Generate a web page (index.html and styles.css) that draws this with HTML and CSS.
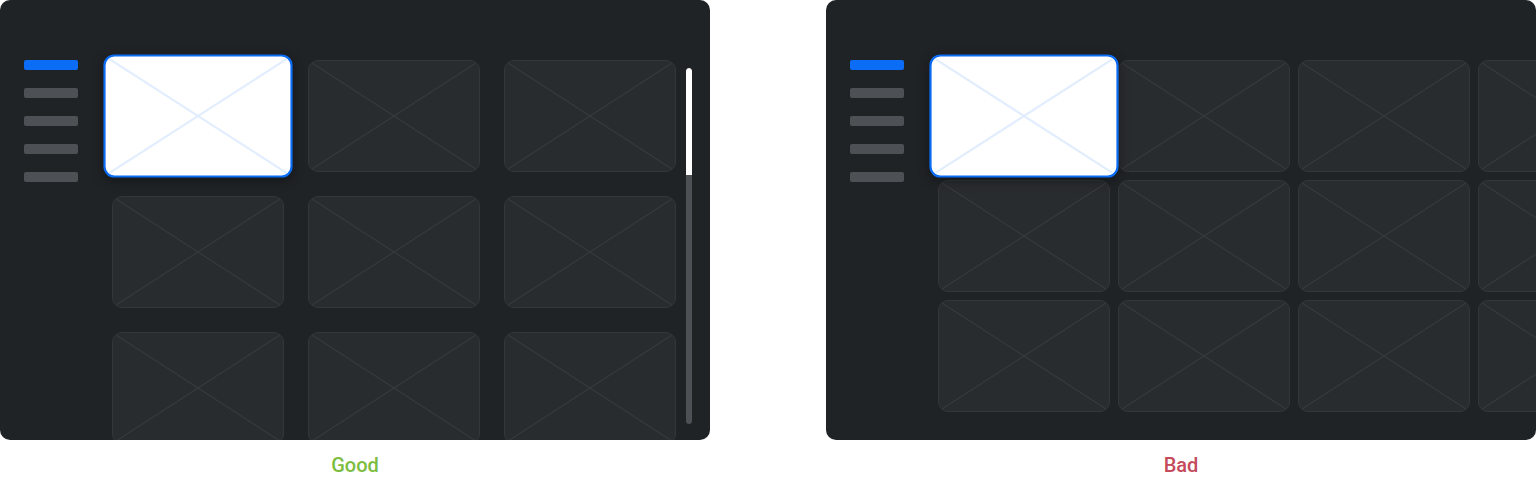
FILE: index.html
```html
<!DOCTYPE html>
<html lang="en">
<head>
<meta charset="utf-8">
<title>Focus in grid</title>
<link rel="stylesheet" href="styles.css">
</head>
<body>
<div class="compare">
  <figure class="example">
    <div class="panel">
      <nav class="side">
        <span class="bar bar-active"></span>
        <span class="bar"></span>
        <span class="bar"></span>
        <span class="bar"></span>
        <span class="bar"></span>
      </nav>
      <div class="grid grid-good">
        <div class="card card-focus"><svg class="x" viewBox="0 0 100 100" preserveAspectRatio="none"><line x1="0" y1="0" x2="100" y2="100" vector-effect="non-scaling-stroke"/><line x1="100" y1="0" x2="0" y2="100" vector-effect="non-scaling-stroke"/></svg></div>
        <div class="card"><svg class="x" viewBox="0 0 100 100" preserveAspectRatio="none"><line x1="0" y1="0" x2="100" y2="100" vector-effect="non-scaling-stroke"/><line x1="100" y1="0" x2="0" y2="100" vector-effect="non-scaling-stroke"/></svg></div>
        <div class="card"><svg class="x" viewBox="0 0 100 100" preserveAspectRatio="none"><line x1="0" y1="0" x2="100" y2="100" vector-effect="non-scaling-stroke"/><line x1="100" y1="0" x2="0" y2="100" vector-effect="non-scaling-stroke"/></svg></div>
        <div class="card"><svg class="x" viewBox="0 0 100 100" preserveAspectRatio="none"><line x1="0" y1="0" x2="100" y2="100" vector-effect="non-scaling-stroke"/><line x1="100" y1="0" x2="0" y2="100" vector-effect="non-scaling-stroke"/></svg></div>
        <div class="card"><svg class="x" viewBox="0 0 100 100" preserveAspectRatio="none"><line x1="0" y1="0" x2="100" y2="100" vector-effect="non-scaling-stroke"/><line x1="100" y1="0" x2="0" y2="100" vector-effect="non-scaling-stroke"/></svg></div>
        <div class="card"><svg class="x" viewBox="0 0 100 100" preserveAspectRatio="none"><line x1="0" y1="0" x2="100" y2="100" vector-effect="non-scaling-stroke"/><line x1="100" y1="0" x2="0" y2="100" vector-effect="non-scaling-stroke"/></svg></div>
        <div class="card"><svg class="x" viewBox="0 0 100 100" preserveAspectRatio="none"><line x1="0" y1="0" x2="100" y2="100" vector-effect="non-scaling-stroke"/><line x1="100" y1="0" x2="0" y2="100" vector-effect="non-scaling-stroke"/></svg></div>
        <div class="card"><svg class="x" viewBox="0 0 100 100" preserveAspectRatio="none"><line x1="0" y1="0" x2="100" y2="100" vector-effect="non-scaling-stroke"/><line x1="100" y1="0" x2="0" y2="100" vector-effect="non-scaling-stroke"/></svg></div>
        <div class="card"><svg class="x" viewBox="0 0 100 100" preserveAspectRatio="none"><line x1="0" y1="0" x2="100" y2="100" vector-effect="non-scaling-stroke"/><line x1="100" y1="0" x2="0" y2="100" vector-effect="non-scaling-stroke"/></svg></div>
      </div>
      <div class="scroll"><span class="thumb"></span></div>
    </div>
    <figcaption class="label label-good">Good</figcaption>
  </figure>

  <figure class="example">
    <div class="panel">
      <nav class="side">
        <span class="bar bar-active"></span>
        <span class="bar"></span>
        <span class="bar"></span>
        <span class="bar"></span>
        <span class="bar"></span>
      </nav>
      <div class="grid grid-bad">
        <div class="card card-focus"><svg class="x" viewBox="0 0 100 100" preserveAspectRatio="none"><line x1="0" y1="0" x2="100" y2="100" vector-effect="non-scaling-stroke"/><line x1="100" y1="0" x2="0" y2="100" vector-effect="non-scaling-stroke"/></svg></div>
        <div class="card"><svg class="x" viewBox="0 0 100 100" preserveAspectRatio="none"><line x1="0" y1="0" x2="100" y2="100" vector-effect="non-scaling-stroke"/><line x1="100" y1="0" x2="0" y2="100" vector-effect="non-scaling-stroke"/></svg></div>
        <div class="card"><svg class="x" viewBox="0 0 100 100" preserveAspectRatio="none"><line x1="0" y1="0" x2="100" y2="100" vector-effect="non-scaling-stroke"/><line x1="100" y1="0" x2="0" y2="100" vector-effect="non-scaling-stroke"/></svg></div>
        <div class="card"><svg class="x" viewBox="0 0 100 100" preserveAspectRatio="none"><line x1="0" y1="0" x2="100" y2="100" vector-effect="non-scaling-stroke"/><line x1="100" y1="0" x2="0" y2="100" vector-effect="non-scaling-stroke"/></svg></div>
        <div class="card"><svg class="x" viewBox="0 0 100 100" preserveAspectRatio="none"><line x1="0" y1="0" x2="100" y2="100" vector-effect="non-scaling-stroke"/><line x1="100" y1="0" x2="0" y2="100" vector-effect="non-scaling-stroke"/></svg></div>
        <div class="card"><svg class="x" viewBox="0 0 100 100" preserveAspectRatio="none"><line x1="0" y1="0" x2="100" y2="100" vector-effect="non-scaling-stroke"/><line x1="100" y1="0" x2="0" y2="100" vector-effect="non-scaling-stroke"/></svg></div>
        <div class="card"><svg class="x" viewBox="0 0 100 100" preserveAspectRatio="none"><line x1="0" y1="0" x2="100" y2="100" vector-effect="non-scaling-stroke"/><line x1="100" y1="0" x2="0" y2="100" vector-effect="non-scaling-stroke"/></svg></div>
        <div class="card"><svg class="x" viewBox="0 0 100 100" preserveAspectRatio="none"><line x1="0" y1="0" x2="100" y2="100" vector-effect="non-scaling-stroke"/><line x1="100" y1="0" x2="0" y2="100" vector-effect="non-scaling-stroke"/></svg></div>
        <div class="card"><svg class="x" viewBox="0 0 100 100" preserveAspectRatio="none"><line x1="0" y1="0" x2="100" y2="100" vector-effect="non-scaling-stroke"/><line x1="100" y1="0" x2="0" y2="100" vector-effect="non-scaling-stroke"/></svg></div>
        <div class="card"><svg class="x" viewBox="0 0 100 100" preserveAspectRatio="none"><line x1="0" y1="0" x2="100" y2="100" vector-effect="non-scaling-stroke"/><line x1="100" y1="0" x2="0" y2="100" vector-effect="non-scaling-stroke"/></svg></div>
        <div class="card"><svg class="x" viewBox="0 0 100 100" preserveAspectRatio="none"><line x1="0" y1="0" x2="100" y2="100" vector-effect="non-scaling-stroke"/><line x1="100" y1="0" x2="0" y2="100" vector-effect="non-scaling-stroke"/></svg></div>
        <div class="card"><svg class="x" viewBox="0 0 100 100" preserveAspectRatio="none"><line x1="0" y1="0" x2="100" y2="100" vector-effect="non-scaling-stroke"/><line x1="100" y1="0" x2="0" y2="100" vector-effect="non-scaling-stroke"/></svg></div>
      </div>
    </div>
    <figcaption class="label label-bad">Bad</figcaption>
  </figure>
</div>
</body>
</html>
```

FILE: styles.css
```css
html, body {
  margin: 0;
  padding: 0;
  background: #ffffff;
}

body {
  font-family: Roboto, "Liberation Sans", Arial, sans-serif;
}

.compare {
  display: flex;
  gap: 116px;
  width: 1536px;
}

.example {
  margin: 0;
  width: 710px;
  flex: 0 0 710px;
  display: flex;
  flex-direction: column;
}

.panel {
  height: 440px;
  box-sizing: border-box;
  background: #202326;
  border-radius: 10px;
  overflow: hidden;
  display: flex;
  align-items: flex-start;
  padding: 60px 0 0 24px;
}

.side {
  flex: 0 0 54px;
  display: flex;
  flex-direction: column;
  gap: 18px;
  margin-right: 34px;
}

.bar {
  display: block;
  height: 10px;
  border-radius: 2px;
  background: #4d5054;
}

.bar-active {
  background: #0b6cf5;
}

.grid {
  flex: 0 0 auto;
  display: grid;
  grid-template-columns: repeat(3, 172px);
  grid-auto-rows: 112px;
}

.grid-good {
  gap: 24px;
}

.grid-bad {
  grid-template-columns: repeat(4, 172px);
  gap: 8px;
}

.card {
  position: relative;
  box-sizing: border-box;
  background: #292c2f;
  border: 1px solid #33363a;
  border-radius: 10px;
  overflow: hidden;
}

.x {
  display: block;
  width: 100%;
  height: 100%;
}

.x line {
  stroke: #36393d;
  stroke-width: 1.2;
}

.card-focus {
  z-index: 2;
  background: #ffffff;
  border: 2px solid #0b6cf5;
  transform: scale(1.1);
  box-shadow: 0 3px 10px rgba(0, 0, 0, 0.35);
}

.card-focus .x line {
  stroke: #e2edfd;
  stroke-width: 2;
}

.scroll {
  flex: 0 0 6px;
  height: 356px;
  margin: 8px 0 0 10px;
  border-radius: 3px;
  background: #4d5054;
  overflow: hidden;
}

.thumb {
  display: block;
  height: 107px;
  background: #ffffff;
  border-radius: 3px 3px 0 0;
}

.label {
  text-align: center;
  font-size: 20px;
  font-weight: 500;
  line-height: 23px;
  margin-top: 14px;
}

.label-good {
  color: #7cbd3f;
}

.label-bad {
  color: #c44a5c;
}
```
